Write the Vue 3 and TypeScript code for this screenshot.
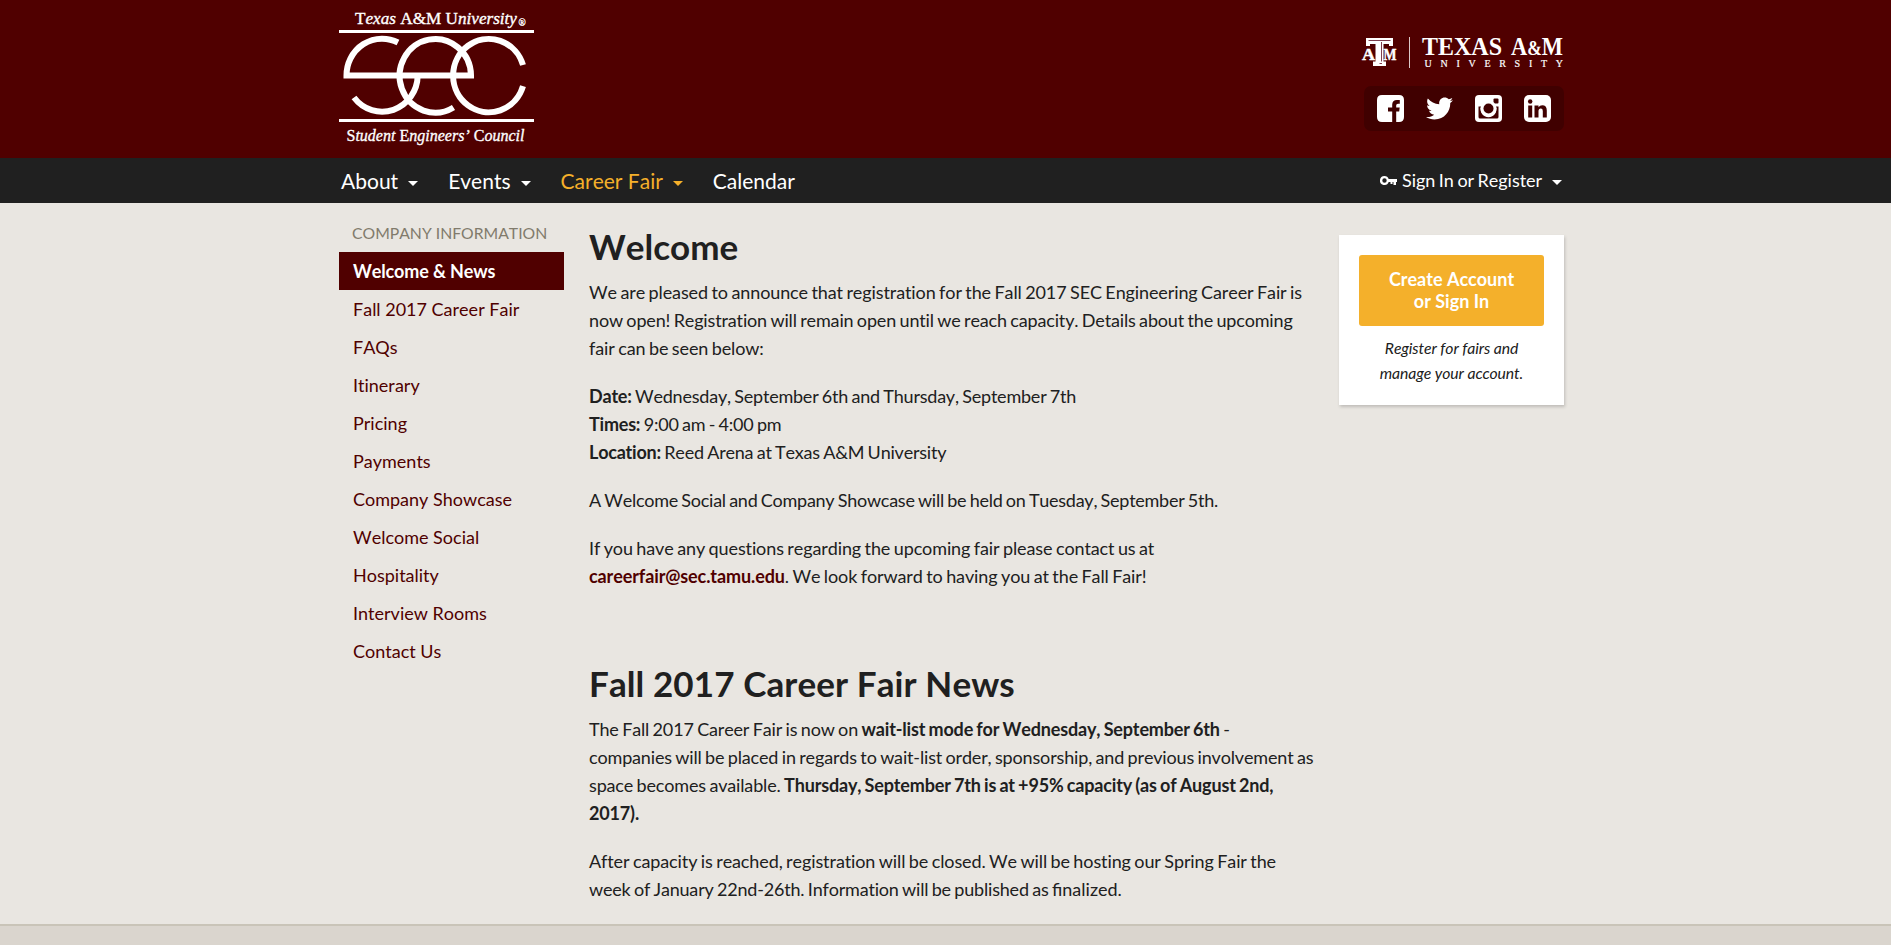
<script setup lang="ts">
interface NavItem {
  label: string
  caret: boolean
  active?: boolean
}

const navItems: NavItem[] = [
  { label: 'About', caret: true },
  { label: 'Events', caret: true },
  { label: 'Career Fair', caret: true, active: true },
  { label: 'Calendar', caret: false },
]

const sideLinks: string[] = [
  'Welcome & News',
  'Fall 2017 Career Fair',
  'FAQs',
  'Itinerary',
  'Pricing',
  'Payments',
  'Company Showcase',
  'Welcome Social',
  'Hospitality',
  'Interview Rooms',
  'Contact Us',
]
</script>

<template>
  <div class="page">
    <header class="banner">
      <div class="container banner-row">
        <svg class="sec-logo" width="200" height="158" viewBox="9 0 200 158" role="img" aria-label="Student Engineers' Council">
          <g fill="#fff" class="logo-text">
            <text x="25" y="24.3" font-size="16.5" textLength="162" lengthAdjust="spacingAndGlyphs">T<tspan class="it">exas</tspan> A&amp;M U<tspan class="it">niversity</tspan></text>
            <text x="188.5" y="26" font-size="9.5">®</text>
            <text x="16.5" y="140.8" font-size="17.5" textLength="178" lengthAdjust="spacingAndGlyphs">S<tspan class="it">tudent</tspan> E<tspan class="it">ngineers’</tspan> C<tspan class="it">ouncil</tspan></text>
            <rect x="9" y="30" width="195" height="3" />
            <rect x="9" y="119" width="195" height="3" />
          </g>
          <g fill="none" stroke="#fff" stroke-width="6">
            <path d="M68 42.5A35.6 36.8 0 0 0 16.5 75.4H141A35.7 36.8 0 1 0 123.5 107.5" />
            <path d="M24 97.5A35.6 36.8 0 0 0 87.7 75.4" />
            <path d="M193 65A35.7 36.7 0 1 0 193 86.2" />
          </g>
        </svg>
        <div class="banner-right">
          <svg class="tamu" width="204" height="34" viewBox="0 0 204 34" role="img" aria-label="Texas A&amp;M University">
            <g fill="#fff" class="slab">
              <text x="2" y="22.5" font-size="17.5" textLength="13" lengthAdjust="spacingAndGlyphs">A</text>
              <text x="23.5" y="22.5" font-size="17.5" textLength="13" lengthAdjust="spacingAndGlyphs">M</text>
              <path d="M6 1H33V9H29V7H23.5V24.500H26V29H13V24.500H15.500V7H10V9H6Z" />
            </g>
            <path d="M8.500 3.500H30.500M21.500 5V24.500M19.500 26.500H22" stroke="#7d3d4d" stroke-width="1" fill="none" />
            <path d="M49.500 0V31" stroke="#dcc8c8" stroke-width="1" />
            <g fill="#fff" class="uni">
              <text x="62" y="18" font-size="25.5" textLength="80" lengthAdjust="spacingAndGlyphs">TEXAS</text>
              <text x="151" y="18" font-size="25.5" textLength="52" lengthAdjust="spacingAndGlyphs">A<tspan font-size="20">&amp;</tspan>M</text>
              <text x="64.500" y="29.500" font-size="10" textLength="138.5" lengthAdjust="spacing" class="light">UNIVERSITY</text>
            </g>
          </svg>
          <div class="social">
            <svg width="27" height="27" viewBox="0 0 27 27"><path fill="#fff" d="M5 0H22Q27 0 27 5V22Q27 27 22 27H19.200V16.500H22.200L22.700 12.500H19.200V10.300Q19.200 8.700 21 8.700H22.800V5H20Q15.200 5 15.200 9.800V12.500H11V16.500H15.200V27H5Q0 27 0 22V5Q0 0 5 0Z" /></svg>
            <svg width="27" height="27" viewBox="0 0 512 512"><path fill="#fff" d="M459.37 151.716c.325 4.548.325 9.097.325 13.645 0 138.72-105.583 298.558-298.558 298.558-59.452 0-114.680-17.219-161.137-47.106 8.447.974 16.568 1.299 25.340 1.299 49.055 0 94.213-16.568 130.274-44.832-46.132-.975-84.792-31.188-98.112-72.772 6.498.974 12.995 1.624 19.818 1.624 9.421 0 18.843-1.300 27.614-3.573-48.081-9.747-84.143-51.980-84.143-102.985v-1.299c13.969 7.797 30.214 12.670 47.431 13.319-28.264-18.843-46.781-51.005-46.781-87.391 0-19.492 5.197-37.360 14.294-52.954 51.655 63.675 129.300 105.258 216.365 109.807-1.624-7.797-2.599-15.918-2.599-24.040 0-57.828 46.782-104.934 104.934-104.934 30.213 0 57.502 12.670 76.670 33.137 23.715-4.548 46.456-13.320 66.599-25.340-7.798 24.366-24.366 44.833-46.132 57.827 21.117-2.273 41.584-8.122 60.426-16.243-14.292 20.791-32.161 39.308-52.628 54.253z" /></svg>
            <svg width="27" height="27" viewBox="0 0 27 27">
              <rect width="27" height="27" rx="4" fill="#fff" />
              <path d="M3.500 11.500H6A8 8 0 1 0 21 11.500H23.500V22Q23.500 23.500 22 23.500H5Q3.500 23.500 3.500 22Z" fill="#400000" />
              <rect x="18.500" y="3.500" width="5" height="5" rx="1" fill="#400000" />
              <circle cx="13.500" cy="13.500" r="8" fill="#fff" />
              <circle cx="13.500" cy="13.500" r="5" fill="#400000" />
            </svg>
            <svg width="27" height="27" viewBox="0 0 27 27">
              <rect width="27" height="27" rx="5" fill="#fff" />
              <circle cx="6.200" cy="6.500" r="2.200" fill="#400000" />
              <path d="M4.200 10.500H8.200V22.500H4.200ZM10.500 10.500H14.500V12.200Q15.800 10.200 18.200 10.200Q22.800 10.200 22.800 15.500V22.500H18.800V16Q18.800 13.600 16.800 13.600Q14.500 13.600 14.500 16.200V22.500H10.500Z" fill="#400000" />
            </svg>
          </div>
        </div>
      </div>
    </header>

    <nav class="navbar">
      <div class="container nav-row">
        <a v-for="item in navItems" :key="item.label" class="nav-link" :class="{ active: item.active }">
          {{ item.label }}<i v-if="item.caret" class="caret"></i>
        </a>
        <a class="sign-in">
          <svg width="17" height="10" viewBox="0 0 17 10"><path fill="#fff" fill-rule="evenodd" d="M4.500 0A4.500 4.500 0 0 1 8.700 3H17V6H16V9H13.500V6H12.500V8H10.500V6H8.700A4.500 4.500 0 1 1 4.500 0ZM4.500 2.300A2.200 2.200 0 1 0 4.500 6.700A2.200 2.200 0 1 0 4.500 2.300Z" /></svg>
          <span>Sign In or Register</span><i class="caret"></i>
        </a>
      </div>
    </nav>

    <div class="container body-row">
      <aside class="sidebar">
        <div class="side-title">COMPANY INFORMATION</div>
        <a v-for="(link, i) in sideLinks" :key="link" class="side-link" :class="{ current: i === 0 }">{{ link }}</a>
      </aside>

      <main class="content">
        <h1>Welcome</h1>
        <p class="loose">
          We are pleased to announce that registration for the Fall 2017 SEC Engineering Career Fair is<br />
          <span class="mid">now open! Registration will remain open until we reach capacity. Details about the upcoming</span><br />
          fair can be seen below:
        </p>
        <p>
          <b>Date:</b> Wednesday, September 6th and Thursday, September 7th<br />
          <b>Times:</b> 9:00 am - 4:00 pm<br />
          <b>Location:</b> Reed Arena at Texas A&amp;M University
        </p>
        <p class="tight">A Welcome Social and Company Showcase will be held on Tuesday, September 5th.</p>
        <p class="loose">
          If you have any questions regarding the upcoming fair please contact us at<br />
          <b class="mail">careerfair@sec.tamu.edu</b>. We look forward to having you at the Fall Fair!
        </p>
        <h1 class="news">Fall 2017 Career Fair News</h1>
        <p class="mid">
          The Fall 2017 Career Fair is now on <b>wait-list mode for Wednesday, September 6th</b> -<br />
          companies will be placed in regards to wait-list order, sponsorship, and previous involvement as<br />
          space becomes available. <b>Thursday, September 7th is at +95% capacity (as of August 2nd,<br />
          2017).</b>
        </p>
        <p class="loose">
          After capacity is reached, registration will be closed. We will be hosting our Spring Fair the<br />
          <span class="week">week of January 22nd-26th. Information will be published as <span class="lig">finalized.</span></span>
        </p>
      </main>

      <section class="card">
        <a class="button">Create Account<br />or Sign In</a>
        <div class="hint">Register for fairs and<br />manage your account.</div>
      </section>
    </div>
    <footer class="footer"></footer>
  </div>
</template>

<style>
body {
  background: #e9e6e1;
  overflow: hidden;
}
</style>

<style scoped>
.page {
  height: 945px;
  overflow: hidden;
  display: flex;
  flex-direction: column;
  font-family: Lato, "Liberation Sans", sans-serif;
  font-size: 18px;
  line-height: 28px;
  color: #202020;
  background: #e9e6e1;
  font-kerning: none;
  font-variant-ligatures: none;
}
.container {
  width: 1225px;
  margin-left: 339px;
  display: flex;
}
.banner {
  height: 158px;
  flex: none;
  background: #500000;
}
.banner-row {
  justify-content: space-between;
}
svg {
  display: block;
  overflow: visible;
}
.logo-text {
  font-family: "Liberation Serif", serif;
}
.logo-text text {
  stroke: #fff;
  stroke-width: 0.35;
}
.it {
  font-style: italic;
}
.banner-right {
  padding-top: 37px;
  display: flex;
  flex-direction: column;
  align-items: flex-end;
}
.slab,
.uni {
  font-family: "Liberation Serif", serif;
  font-weight: 700;
}
.slab text {
  stroke: #fff;
  stroke-width: 0.5;
}
.light {
  font-weight: 400;
  stroke: #fff;
  stroke-width: 0.2;
}
.social {
  margin-top: 15px;
  width: 200px;
  height: 45px;
  border-radius: 7px;
  background: #400000;
  display: flex;
  align-items: center;
  justify-content: space-between;
  padding: 0 13px;
  box-sizing: border-box;
}
.navbar {
  height: 45px;
  flex: none;
  background: #202020;
  color: #fff;
}
.nav-row {
  height: 45px;
  align-items: center;
}
.nav-link {
  font-size: 21px;
  margin-left: 2px;
  margin-right: 28px;
  white-space: nowrap;
}
.nav-link.active {
  color: #f5b02a;
}
.caret {
  display: inline-block;
  border: 5px solid transparent;
  border-top-color: currentColor;
  border-bottom: 0;
  margin-left: 10px;
  vertical-align: 3px;
}
.sign-in {
  margin-left: auto;
  margin-right: 2px;
  display: flex;
  align-items: center;
  white-space: nowrap;
  word-spacing: -1px;
  letter-spacing: -0.05px;
}
.sign-in span {
  margin-left: 5px;
  margin-top: -1px;
}
.sign-in .caret {
  margin-top: 3px;
}
.body-row {
  flex: 1;
  min-height: 0;
}
.sidebar {
  width: 225px;
  padding-top: 16px;
}
.side-title {
  height: 33px;
  padding-left: 13px;
  font-size: 15.750px;
  color: #817b6c;
  white-space: nowrap;
}
.side-link {
  display: block;
  height: 38px;
  line-height: 39px;
  padding-left: 14px;
  color: #500000;
}
.side-link.current {
  background: #500000;
  color: #fff;
  font-weight: 700;
  letter-spacing: -0.15px;
}
.content {
  width: 730px;
  margin-left: 25px;
  padding-top: 23px;
  white-space: nowrap;
}
h1 {
  margin: 0 0 11px;
  font-size: 35px;
  line-height: 41px;
  font-weight: 700;
}
p {
  margin: 0 0 20px;
  word-spacing: -1px;
  letter-spacing: -0.22px;
}
.loose {
  letter-spacing: -0.11px;
}
.mid {
  letter-spacing: -0.16px;
}
.tight {
  letter-spacing: -0.26px;
}
.week {
  letter-spacing: -0.19px;
}
h1.news {
  margin-top: 73px;
  letter-spacing: 0.1px;
}
.mail {
  color: #500000;
}
.lig {
  font-variant-ligatures: common-ligatures;
  letter-spacing: 0;
}
.card {
  width: 225px;
  height: 170px;
  margin: 32px 0 0 20px;
  padding: 20px;
  box-sizing: border-box;
  background: #fff;
  box-shadow: 1px 2px 3px rgba(0, 0, 0, 0.18);
  text-align: center;
}
.button {
  display: block;
  height: 71px;
  padding-top: 13px;
  box-sizing: border-box;
  border-radius: 3px;
  background: #f4b02b;
  color: #fff;
  font-weight: 700;
  font-size: 18px;
  line-height: 22px;
}
.hint {
  margin-top: 9px;
  font-size: 15.750px;
  line-height: 25px;
  font-style: italic;
  letter-spacing: -0.1px;
}
.footer {
  height: 19px;
  flex: none;
  background: #dad5ce;
  border-top: 2px solid #c9c4b8;
}
</style>
